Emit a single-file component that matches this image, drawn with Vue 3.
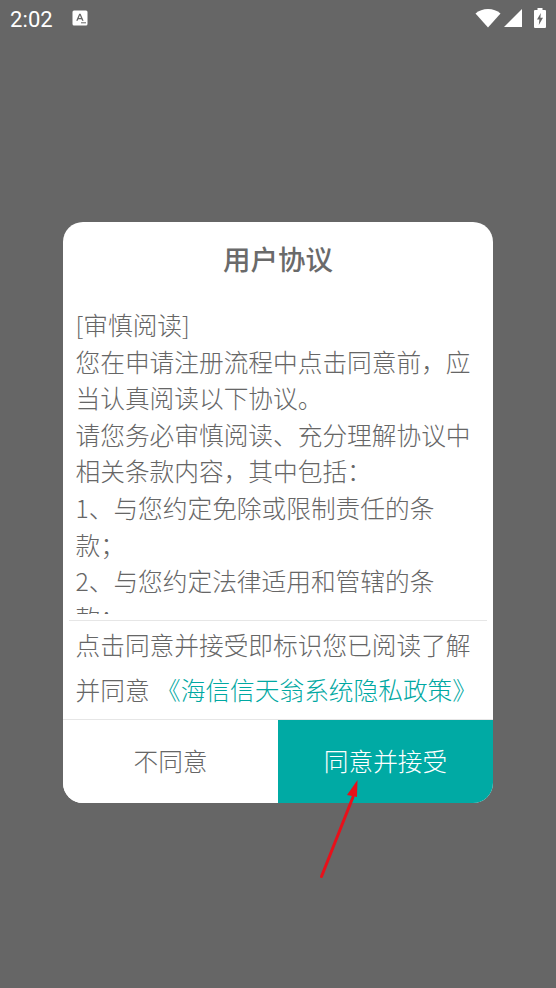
<script setup>
const lines = [
  '[审慎阅读]',
  '您在申请注册流程中点击同意前，应当认真阅读以下协议。',
  '请您务必审慎阅读、充分理解协议中相关条款内容，其中包括：',
  '1、与您约定免除或限制责任的条款；',
  '2、与您约定法律适用和管辖的条款；',
]
</script>

<template>
  <div class="screen">
    <header class="status">
      <div class="status-left">
        <span class="time">2:02</span>
        <svg class="a-icon" width="16" height="16" viewBox="0 0 16 16">
          <rect x="0.500" y="0.500" width="15" height="15" rx="1.500" fill="#fff" />
          <path d="M4.200 10.800 7.200 3.800h1.400l3 7h-1.500l-.6-1.600H6.300l-.6 1.600zM6.800 8h2.200L7.900 5.200z" fill="#666" />
          <rect x="9" y="12.300" width="5" height="1" fill="#666" />
        </svg>
      </div>
      <div class="status-right">
        <svg class="wifi" width="26" height="20" viewBox="0 0 26 20"><path d="M0.500 5.500C3.800 2.500 8.200 1 13 1s9.200 1.500 12.500 4.500L13 19.500z" fill="#fff" /></svg>
        <svg class="cell" width="18" height="18" viewBox="0 0 18 18"><path d="M0 18 18 0v18z" fill="#fff" /></svg>
        <svg class="battery" width="12" height="20" viewBox="0 0 12 20">
          <path fill-rule="evenodd" d="M3.500 0h5v2H11a1 1 0 0 1 1 1v16a1 1 0 0 1-1 1H1a1 1 0 0 1-1-1V3a1 1 0 0 1 1-1h2.500zM6.800 5 3 11.500h2.400L4.800 17 9 9.800H6.400z" fill="#fff" />
        </svg>
      </div>
    </header>

    <main class="overlay">
      <section class="dialog">
        <h1 class="title">用户协议</h1>
        <div class="scroll">
          <p v-for="line in lines" :key="line">{{ line }}</p>
        </div>
        <div class="notice">
          <p>点击同意并接受即标识您已阅读了解</p>
          <p>并同意 <span class="link">《海信信天翁系统隐私政策》</span></p>
        </div>
        <div class="actions">
          <button class="btn decline">不同意</button>
          <button class="btn accept">同意并接受</button>
        </div>
      </section>
      <svg class="arrow" width="50" height="112" viewBox="0 0 50 112">
        <path d="M2.500 106.500 34 27" stroke="#e8101a" stroke-width="3" fill="none" stroke-linecap="round" />
        <path d="M38.500 10 38 27 28 25z" fill="#e8101a" />
      </svg>
    </main>
  </div>
</template>

<style scoped>
.screen {
  width: 556px;
  height: 988px;
  background: #666;
  overflow: hidden;
  position: relative;
  font-family: "Noto Sans CJK SC", "Noto Sans", sans-serif;
  color: #666;
}
.status {
  height: 38px;
  display: flex;
  justify-content: space-between;
  align-items: center;
  padding: 0 10px 0 10px;
  color: #fff;
}
.status-left {
  display: flex;
  align-items: center;
  gap: 19px;
}
.a-icon {
  margin-top: -2px;
}
.time {
  font-family: Roboto, sans-serif;
  font-size: 22px;
  letter-spacing: 0.100px;
}
.status-right {
  display: flex;
  align-items: center;
  gap: 3px;
  margin-top: -2px;
}
.battery {
  margin-left: 9px;
}
.overlay {
  display: flex;
  flex-direction: column;
  align-items: center;
  padding-top: 184px;
}
.dialog {
  width: 430px;
  height: 581px;
  background: #fff;
  border-radius: 20px;
  overflow: hidden;
  display: flex;
  flex-direction: column;
}
.title {
  margin: 0;
  height: 77px;
  line-height: 72px;
  text-align: center;
  font-size: 27.500px;
  font-weight: 500;
  color: #6a6a6a;
  flex: none;
}
.scroll {
  box-sizing: border-box;
  height: 315px;
  flex: none;
  padding: 7px 12.500px 0;
  overflow: hidden;
  font-size: 24.700px;
  font-weight: 300;
  line-height: 36.600px;
  color: #666;
}
.scroll p { margin: 0; }
.notice {
  box-sizing: border-box;
  flex: none;
  margin: 6px 6px 0;
  border-top: 1px solid #e6e6e6;
  padding: 1px 6.500px 0;
  height: 99px;
  font-size: 24.700px;
  font-weight: 300;
  line-height: 45px;
  white-space: nowrap;
  color: #666;
}
.notice p { margin: 0; }
.link {
  color: #00a8a2;
  margin-left: 1px;
}
.actions {
  flex: 1;
  display: flex;
  border-top: 1px solid #e6e6e6;
}
.btn {
  flex: 1;
  border: 0;
  padding: 0 0 4px;
  font-family: inherit;
  font-size: 24.700px;
  font-weight: 300;
  background: #fff;
  color: #666;
}
.accept {
  flex: 0 0 215px;
  background: #00aaa4;
  color: #fff;
}
.arrow {
  position: absolute;
  left: 319px;
  top: 770px;
}
</style>
